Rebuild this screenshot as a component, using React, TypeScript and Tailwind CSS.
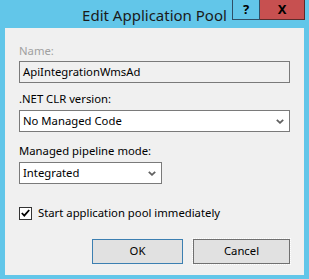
import { FC } from 'react';

const Chevron: FC = () => (
  <svg width="8" height="5" viewBox="0 0 8 5" className="shrink-0">
    <path d="M0.8 0.8 L4 3.8 L7.2 0.8" fill="none" stroke="#606060" strokeWidth="1.8" />
  </svg>
);

const Select: FC<{ value: string; className?: string }> = ({ value, className = '' }) => (
  <div
    className={`flex h-[22px] items-center justify-between border border-[#7a7a7a] bg-white pl-[3px] pr-[5px] ${className}`}
  >
    <span className="text-[11.3px] leading-none text-black">{value}</span>
    <Chevron />
  </div>
);

export default function App() {
  return (
    <div
      className="flex h-[279px] w-[309px] flex-col bg-[#62c6e9]"
      style={{ fontFamily: '"Noto Sans", "Open Sans", sans-serif' }}
    >
      {/* title bar */}
      <div className="relative flex h-[28px] items-center justify-center">
        <span className="pt-[2px] text-[15px] text-[#1a1a1a]">Edit Application Pool</span>
        <div className="absolute right-[4px] top-0 flex h-[20px]">
          <div className="flex w-[28px] items-center justify-center border-x border-b border-[#2f4f66] bg-[#62c6e9] text-[13px] font-bold leading-none text-black">
            ?
          </div>
          <div className="flex w-[45px] items-center justify-center border-b border-r border-[#5a2c2c] bg-[#c75050] text-[13px] font-bold leading-none text-black">
            X
          </div>
        </div>
      </div>

      {/* client area */}
      <div className="mx-[5px] mb-[4px] flex flex-1 flex-col bg-[#f0f0f0] pl-[14px] pr-[14px] pt-[15px] text-[11.3px] text-black">
        <div className="leading-[16px] text-[#a0a0a0]">Name:</div>
        <div className="mt-[2px] flex h-[22px] items-center border border-[#7a7a7a] bg-[#f0f0f0] pl-[3px]">
          ApiIntegrationWmsAd
        </div>

        <div className="mt-[8px] leading-[16px]">.NET CLR version:</div>
        <Select value="No Managed Code" className="mt-[3px] w-[271px]" />

        <div className="mt-[11px] leading-[16px]">Managed pipeline mode:</div>
        <Select value="Integrated" className="mt-[3px] w-[143px]" />

        <label className="mt-[21px] flex items-center gap-[6px]">
          <span className="flex h-[13px] w-[13px] items-center justify-center border border-[#333] bg-white">
            <svg width="9" height="8" viewBox="0 0 9 8">
              <path d="M0.8 4 L3.3 6.6 L8.2 1" fill="none" stroke="#000" strokeWidth="1.8" />
            </svg>
          </span>
          <span className="leading-[16px]">Start application pool immediately</span>
        </label>

        <div className="mt-[18px] flex justify-end gap-[10px]">
          <button className="h-[25px] w-[91px] border border-[#3c7fb1] bg-[#e1e1e1] text-[11.3px]">OK</button>
          <button className="h-[25px] w-[97px] border border-[#707070] bg-[#e1e1e1] text-[11.3px] outline-1 outline-dotted outline-white">
            Cancel
          </button>
        </div>
      </div>
    </div>
  );
}
